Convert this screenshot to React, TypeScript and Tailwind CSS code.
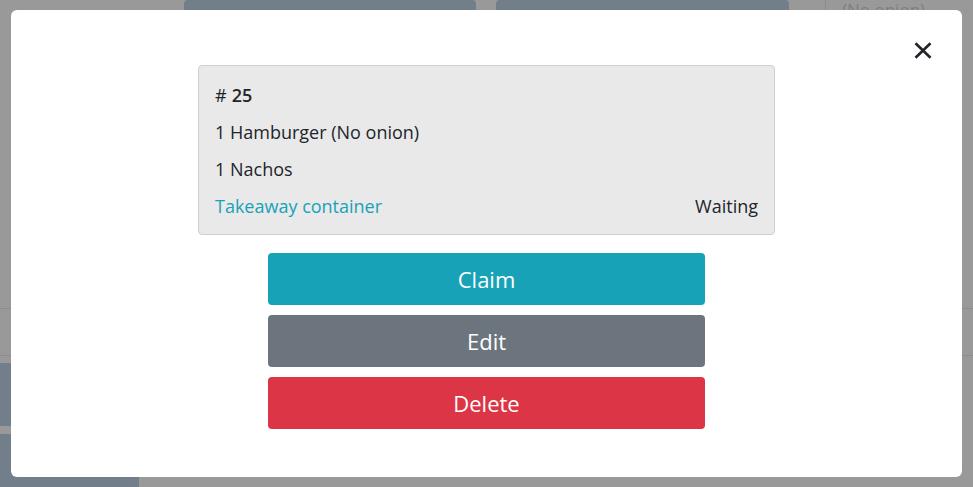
import React from 'react';

const items = ['1 Hamburger (No onion)', '1 Nachos'];

const actions = [
  { label: 'Claim', cls: 'bg-[#17a2b8]' },
  { label: 'Edit', cls: 'bg-[#6c757d]' },
  { label: 'Delete', cls: 'bg-[#dc3545]' },
];

export default function App() {
  return (
    <div
      className="w-[973px] h-[487px] relative overflow-hidden bg-[#999999]"
      style={{ fontFamily: '"Open Sans", "Noto Sans", sans-serif' }}
    >
      {/* Dimmed page behind the modal */}
      <div className="flex flex-col h-full">
        <div className="flex h-[308px]">
          <div className="flex gap-[20px] pl-[184px] items-start">
            <div className="w-[292px] h-[60px] bg-[#737e8b] rounded-sm flex justify-center pt-[6px] text-[26px] text-[#a8b0ba]">Hamburger</div>
            <div className="w-[293px] h-[60px] bg-[#737e8b] rounded-sm flex justify-center pt-[6px] text-[26px] text-[#a8b0ba]">Drinks</div>
          </div>
          <div className="ml-[36px] border-l border-[#8c8c8c] pl-[16px] text-[#7f7f7f] text-[17px] leading-none pt-[1px]">
            (No onion)
          </div>
        </div>
        <div className="h-[47px] border-t border-[#8c8c8c]" />
        <div className="h-[8px] border-t border-[#8c8c8c]" />
        <div className="h-[63px] w-[139px] bg-[#737e8b]" />
        <div className="h-[8px] w-[139px]" />
        <div className="flex-1 w-[139px] bg-[#737e8b]" />
      </div>

      {/* Modal */}
      <div className="absolute left-[11px] top-[10px] w-[951px] h-[467px] bg-white rounded-md">
        <button className="absolute right-[30px] top-[31px] w-[18px] h-[18px] flex items-center justify-center">
          <svg width="18" height="17" viewBox="0 0 18 17" fill="none">
            <path d="M1.5 1.2 L16.5 15.8 M16.5 1.2 L1.5 15.8" stroke="#212529" strokeWidth="2.6" />
          </svg>
        </button>

        <div className="flex flex-col items-center pt-[55px]">
          <div className="w-[577px] h-[170px] bg-[#e9e9e9] border border-[#cfcfcf] rounded-[4px] px-[16px] pt-[11px] text-[18px] text-[#212529]">
            <div className="h-[37px] flex items-center font-semibold">
              <span className="font-normal mr-[5px]">#</span>25
            </div>
            {items.map((it) => (
              <div key={it} className="h-[37px] flex items-center">{it}</div>
            ))}
            <div className="h-[36px] flex items-center justify-between">
              <span className="text-[#17a2b8]">Takeaway container</span>
              <span>Waiting</span>
            </div>
          </div>

          <div className="flex flex-col gap-[10px] mt-[18px] w-[437px]">
            {actions.map((a) => (
              <button
                key={a.label}
                className={`h-[52px] w-full rounded-[4px] text-white text-[22px] ${a.cls}`}
              >
                {a.label}
              </button>
            ))}
          </div>
        </div>
      </div>
    </div>
  );
}
